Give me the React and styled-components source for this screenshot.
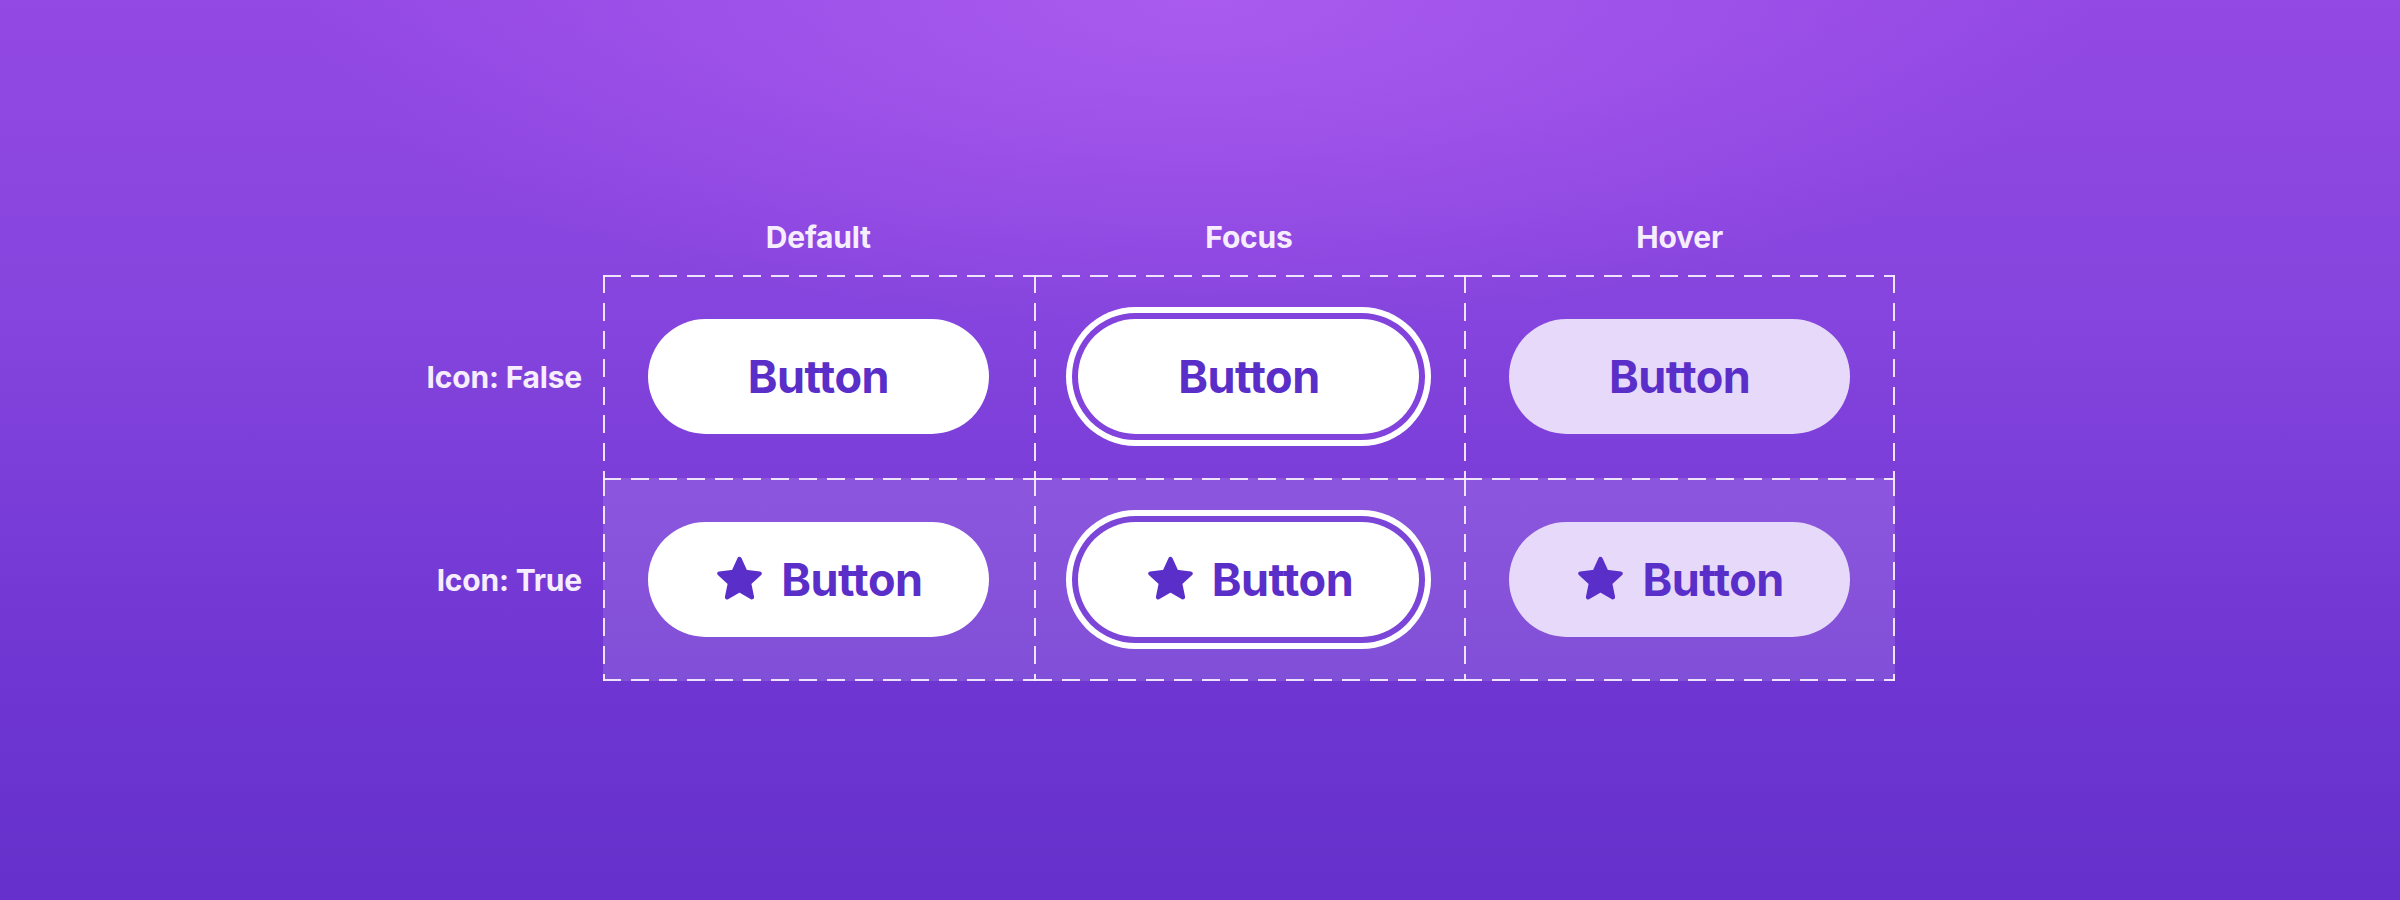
import React from "react";
import styled, { createGlobalStyle, css } from "styled-components";

const LINE = "rgba(248, 240, 255, 0.92)";
const INK = "#5a2ec8";

const GlobalStyle = createGlobalStyle`
  html, body {
    margin: 0;
    padding: 0;
  }
  body {
    font-family: Inter, "Noto Sans", "Liberation Sans", sans-serif;
  }
`;

const Page = styled.div`
  box-sizing: border-box;
  width: 2400px;
  height: 900px;
  padding: 219px 0 0 382px;
  background:
    radial-gradient(ellipse 900px 330px at 50% 0%, rgba(174, 94, 240, 0.85) 0%, rgba(174, 94, 240, 0) 100%),
    linear-gradient(180deg, #9349e4 0%, #8b46e0 22%, #8444dd 37%, #7a3dd8 55%, #6e35d2 77%, #6530cb 100%);
`;

const Board = styled.div`
  display: grid;
  grid-template-columns: 221px repeat(3, 1fr);
  grid-template-rows: auto 203px 203px;
  width: 1513px;
`;

const ColumnTitle = styled.div`
  padding-bottom: 20px;
  text-align: center;
  font-size: 30px;
  line-height: 36px;
  font-weight: 700;
  letter-spacing: -0.2px;
  color: #f6edfe;
`;

const RowLabel = styled.div`
  align-self: center;
  padding-right: 21px;
  text-align: right;
  font-size: 30px;
  line-height: 36px;
  font-weight: 700;
  letter-spacing: -0.2px;
  color: #f6edfe;
`;

// dashed edges, 18px dash / 10px gap, 2px thick
const dashX = `repeating-linear-gradient(90deg, ${LINE} 0 18px, transparent 18px 28px)`;
const dashY = `repeating-linear-gradient(180deg, ${LINE} 0 18px, transparent 18px 28px)`;

const edges = ({ $right, $bottom, $shade }) => {
  const layers = [
    `${dashX} left top / 100% 2px no-repeat`,
    `${dashY} left top / 2px 100% no-repeat`,
  ];
  if ($right) layers.push(`${dashY} right top / 2px 100% no-repeat`);
  if ($bottom) layers.push(`${dashX} left bottom / 100% 2px no-repeat`);
  layers.push($shade ? "rgba(255, 255, 255, 0.13)" : "transparent");
  return css`
    background: ${layers.join(",\n")};
  `;
};

const Cell = styled.div`
  display: flex;
  align-items: center;
  justify-content: center;
  ${edges}
`;

const variants = {
  default: css`
    background: #ffffff;
  `,
  focus: css`
    background: #ffffff;
    box-shadow: 0 0 0 6px ${(p) => p.$gap}, 0 0 0 12px #ffffff;
  `,
  hover: css`
    background: #e7d9fa;
  `,
};

const Button = styled.button`
  display: inline-flex;
  align-items: center;
  justify-content: center;
  gap: 16px;
  width: 341px;
  height: 115px;
  padding: 0;
  border: none;
  border-radius: 999px;
  font-family: Inter, "Noto Sans", sans-serif;
  font-size: 45px;
  line-height: 1;
  font-weight: 700;
  letter-spacing: -0.5px;
  color: ${INK};
  cursor: pointer;
  ${(p) => variants[p.$variant]}
`;

const StarGlyph = styled.svg`
  flex: none;
  width: 51px;
  height: 51px;
  margin-top: -2px;
`;

const Star = () => (
  <StarGlyph viewBox="0 0 48 48">
    <polygon
      points="24,5.5 29.58,17.81 43.02,19.32 33.04,28.44 35.76,41.68 24,35 12.24,41.68 14.96,28.44 4.98,19.32 18.42,17.81"
      fill="currentColor"
      stroke="currentColor"
      strokeWidth="4"
      strokeLinejoin="round"
    />
  </StarGlyph>
);

const columns = [
  { title: "Default", variant: "default" },
  { title: "Focus", variant: "focus" },
  { title: "Hover", variant: "hover" },
];

const rows = [
  { label: "Icon: False", icon: false, gap: "#8243dc" },
  { label: "Icon: True", icon: true, gap: "#7b45d8" },
];

export default function App() {
  return (
    <>
      <GlobalStyle />
      <Page>
        <Board>
          <div />
          {columns.map((c) => (
            <ColumnTitle key={c.title}>{c.title}</ColumnTitle>
          ))}
          {rows.map((r, ri) => (
            <React.Fragment key={r.label}>
              <RowLabel>{r.label}</RowLabel>
              {columns.map((c, ci) => (
                <Cell
                  key={c.title}
                  $right={ci === columns.length - 1}
                  $bottom={ri === rows.length - 1}
                  $shade={r.icon}
                >
                  <Button $variant={c.variant} $gap={r.gap}>
                    {r.icon && <Star />}
                    Button
                  </Button>
                </Cell>
              ))}
            </React.Fragment>
          ))}
        </Board>
      </Page>
    </>
  );
}
